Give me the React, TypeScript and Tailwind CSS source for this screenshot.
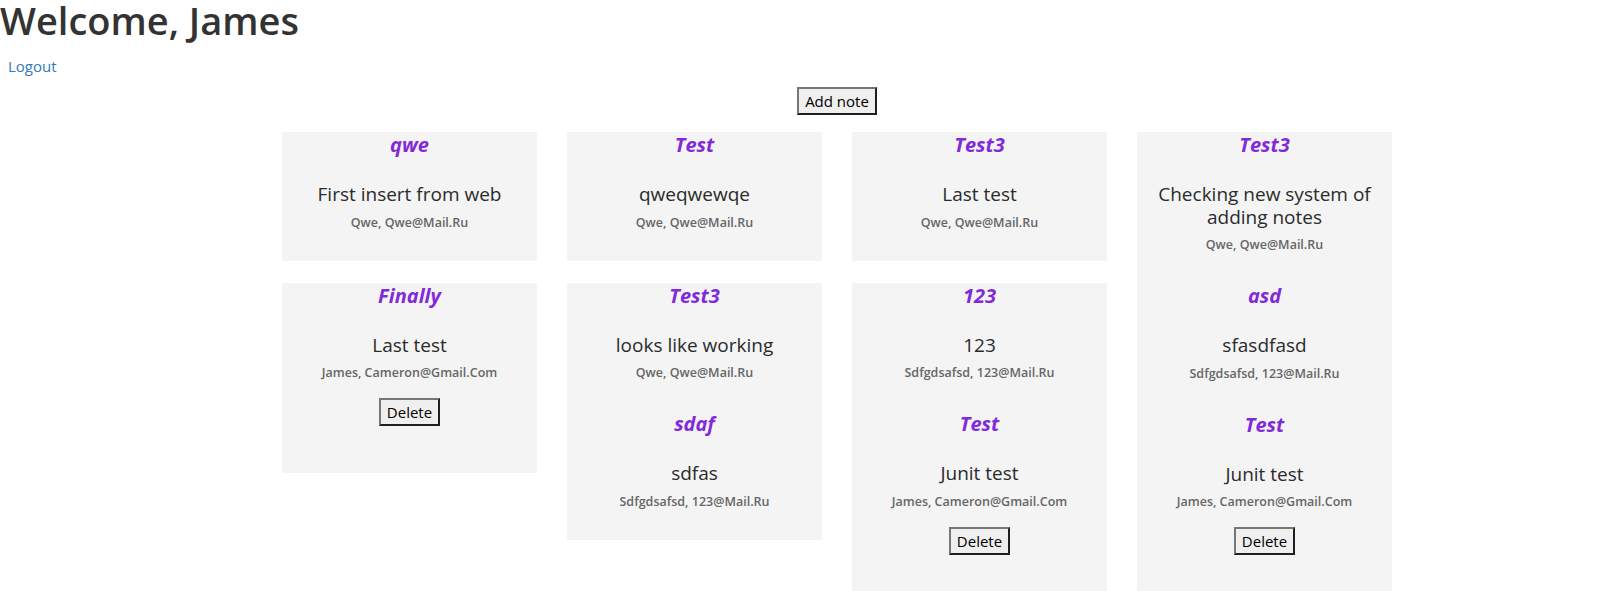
import React from "react";

type Note = { title: string; body: string; author: string; del?: boolean };

const font = { fontFamily: '"Open Sans", "Noto Sans", sans-serif' };

function Btn({ children }: { children: React.ReactNode }) {
  return (
    <button className="h-[28px] px-[6px] bg-[#efefef] text-[15px] leading-[20px] text-black border-2 border-solid border-t-[#767676] border-l-[#767676] border-r-[#1f1f1f] border-b-[#1f1f1f]">
      {children}
    </button>
  );
}

function NoteBlock({ n }: { n: Note }) {
  return (
    <div className="flex flex-col items-center text-center px-[12px] pb-[30px]">
      <div className="h-[25px] leading-[25px] text-[20px] font-bold italic text-[#8229d8]">{n.title}</div>
      <div className="mt-[26px] text-[19px] leading-[22.5px] text-[#2b2b2b]">{n.body}</div>
      <div className="mt-[9px] text-[12.5px] leading-[16px] font-semibold text-[#666666]">{n.author}</div>
      {n.del && (
        <div className="mt-[17px] mb-[17px]">
          <Btn>Delete</Btn>
        </div>
      )}
    </div>
  );
}

function Panel({ notes }: { notes: Note[] }) {
  return (
    <div className="bg-[#f4f4f4]">
      {notes.map((n, i) => (
        <NoteBlock key={i} n={n} />
      ))}
    </div>
  );
}

const qwe = "Qwe, Qwe@Mail.Ru";
const sdf = "Sdfgdsafsd, 123@Mail.Ru";
const jc = "James, Cameron@Gmail.Com";

const columns: Note[][][] = [
  [
    [{ title: "qwe", body: "First insert from web", author: qwe }],
    [{ title: "Finally", body: "Last test", author: jc, del: true }],
  ],
  [
    [{ title: "Test", body: "qweqwewqe", author: qwe }],
    [
      { title: "Test3", body: "looks like working", author: qwe },
      { title: "sdaf", body: "sdfas", author: sdf },
    ],
  ],
  [
    [{ title: "Test3", body: "Last test", author: qwe }],
    [
      { title: "123", body: "123", author: sdf },
      { title: "Test", body: "Junit test", author: jc, del: true },
    ],
  ],
  [
    [
      { title: "Test3", body: "Checking new system of adding notes", author: qwe },
      { title: "asd", body: "sfasdfasd", author: sdf },
      { title: "Test", body: "Junit test", author: jc, del: true },
    ],
  ],
];

export default function App() {
  return (
    <div className="min-h-screen bg-white text-[#333333]" style={font}>
      <div className="h-[40px] pt-[2px]">
        <h1 className="m-0 text-[38px] leading-[36px] font-semibold text-[#333333]">Welcome, James</h1>
      </div>
      <div className="mt-[16px] px-[8px] text-[15px] leading-[20px]">
        <a className="text-[#337ab7]" href="#">Logout</a>
      </div>
      <div className="ml-[282px] w-[1110px]">
        <div className="mt-[11px] flex justify-center">
          <Btn>Add note</Btn>
        </div>
        <div className="mt-[17px] flex gap-[30px] items-start">
          {columns.map((col, ci) => (
            <div key={ci} className="w-[255px] flex flex-col gap-[22px]">
              {col.map((p, pi) => (
                <Panel key={pi} notes={p} />
              ))}
            </div>
          ))}
        </div>
      </div>
    </div>
  );
}
